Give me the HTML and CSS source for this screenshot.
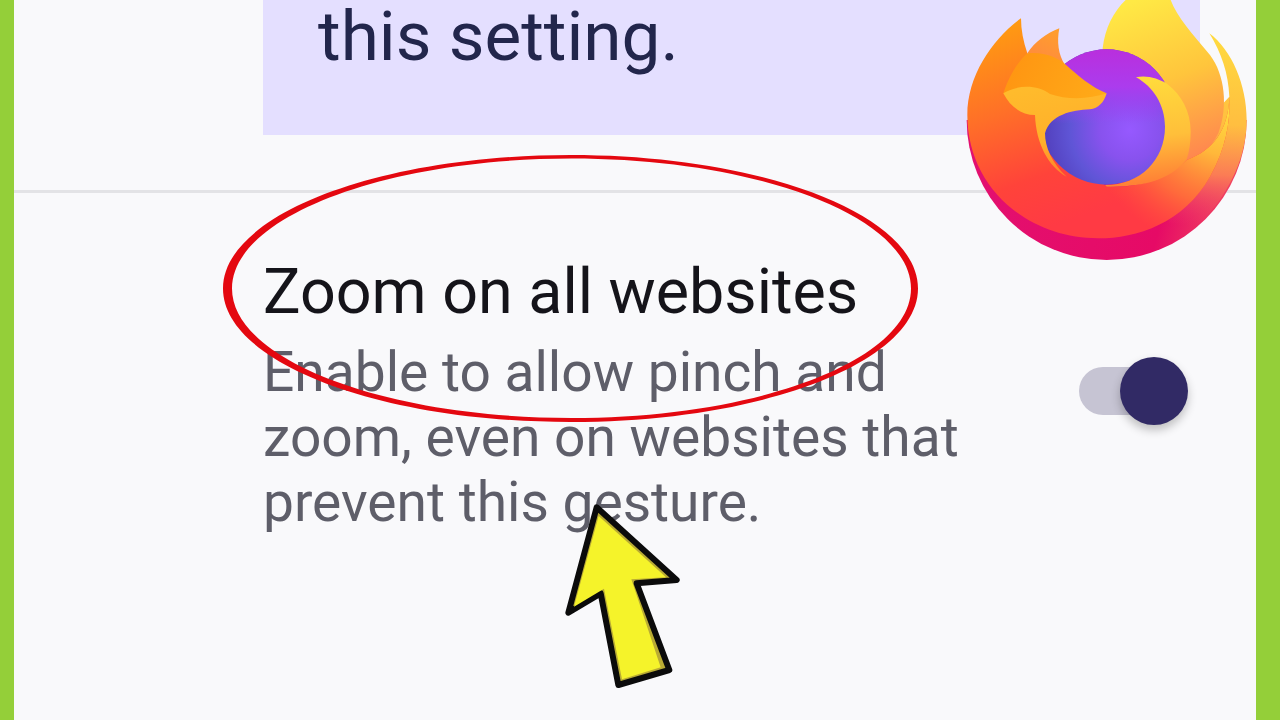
FILE: index.html
```
<!DOCTYPE html>
<html lang="en">
<head>
<meta charset="utf-8">
<title>Zoom on all websites</title>
<link rel="stylesheet" href="styles.css">
</head>
<body>
<div class="frame">
  <main class="screen">
    <section class="notice"><p class="notice-text">this setting.</p></section>
    <hr class="divider">
    <section class="setting">
      <div class="setting-copy">
        <h1 class="setting-title">Zoom on all websites</h1>
        <p class="setting-desc">Enable to allow pinch and zoom, even on websites that prevent this gesture.</p>
      </div>
      <div class="toggle"><span class="toggle-track"></span><span class="toggle-knob"></span></div>
    </section>
  </main>
</div>

<svg class="ring" viewBox="0 0 720 290" aria-hidden="true">
  <path fill="#e40810" fill-rule="evenodd" d="M3 138.500C3 64.800 158.600 5 350.500 5S698 64.800 698 138.500 542.400 272 350.500 272 3 212.200 3 138.500ZM12 138.500C12 209.800 164 268 351.500 268S691 209.800 691 138.500 539 8.500 351.500 8.500 12 67.200 12 138.500Z"/>
</svg>

<svg class="logo" viewBox="0 0 990 810" aria-hidden="true">
  <defs>
    <linearGradient id="lgBase" gradientUnits="userSpaceOnUse" x1="100" y1="500" x2="820" y2="660">
      <stop offset="0" stop-color="#e3106f"/>
      <stop offset="0.75" stop-color="#e60a66"/>
      <stop offset="1" stop-color="#f0405f"/>
    </linearGradient>
    <linearGradient id="lgFlame" gradientUnits="userSpaceOnUse" x1="560" y1="0" x2="740" y2="480">
      <stop offset="0" stop-color="#ffe945"/>
      <stop offset="0.5" stop-color="#ffc53c"/>
      <stop offset="1" stop-color="#ff8450"/>
    </linearGradient>
    <linearGradient id="lgCrescent" gradientUnits="userSpaceOnUse" x1="800" y1="120" x2="770" y2="680">
      <stop offset="0" stop-color="#ffd93f"/>
      <stop offset="0.45" stop-color="#ffbe40"/>
      <stop offset="0.72" stop-color="#fb7c55"/>
      <stop offset="1" stop-color="#ee3c6c" stop-opacity="0"/>
    </linearGradient>
    <linearGradient id="lgMain" gradientUnits="userSpaceOnUse" x1="220" y1="60" x2="420" y2="640">
      <stop offset="0" stop-color="#ff9a12"/>
      <stop offset="0.4" stop-color="#ff6f28"/>
      <stop offset="0.75" stop-color="#ff433a"/>
      <stop offset="1" stop-color="#ff3a44"/>
    </linearGradient>
    <radialGradient id="lgGlow" gradientUnits="userSpaceOnUse" cx="830" cy="310" r="440">
      <stop offset="0" stop-color="#ffe23f"/>
      <stop offset="0.35" stop-color="#ffb83a"/>
      <stop offset="0.7" stop-color="#ff7a38" stop-opacity="0.75"/>
      <stop offset="1" stop-color="#ff5a3a" stop-opacity="0"/>
    </radialGradient>
    <linearGradient id="lgEar" x1="0.8" y1="0" x2="0.4" y2="1">
      <stop offset="0" stop-color="#ff9f2c"/>
      <stop offset="1" stop-color="#ff8a3f"/>
    </linearGradient>
    <radialGradient id="lgGlobe" gradientUnits="userSpaceOnUse" cx="540" cy="390" r="300">
      <stop offset="0" stop-color="#9659ff"/>
      <stop offset="0.3" stop-color="#8852ee"/>
      <stop offset="0.6" stop-color="#5f55d6"/>
      <stop offset="1" stop-color="#4c35b0"/>
    </radialGradient>
    <linearGradient id="lgGlobeTop" x1="0" y1="0" x2="0" y2="1">
      <stop offset="0" stop-color="#b92fdd"/>
      <stop offset="0.28" stop-color="#ab3cee"/>
      <stop offset="0.55" stop-color="#a040f5" stop-opacity="0"/>
    </linearGradient>
    <linearGradient id="lgSwoosh" gradientUnits="userSpaceOnUse" x1="580" y1="230" x2="620" y2="560">
      <stop offset="0" stop-color="#ffdc3c"/>
      <stop offset="0.55" stop-color="#ffbf3a"/>
      <stop offset="1" stop-color="#ff7a35"/>
    </linearGradient>
    <linearGradient id="lgFox" gradientUnits="userSpaceOnUse" x1="260" y1="260" x2="320" y2="530">
      <stop offset="0" stop-color="#ffbb2c"/>
      <stop offset="0.6" stop-color="#ffb02a"/>
      <stop offset="1" stop-color="#ff7f2a"/>
    </linearGradient>
    <linearGradient id="lgHead" gradientUnits="userSpaceOnUse" x1="200" y1="170" x2="450" y2="290">
      <stop offset="0" stop-color="#ff9612"/>
      <stop offset="1" stop-color="#ffaa18"/>
    </linearGradient>
  </defs>
  <path fill="url(#lgBase)" d="M50 360A420 420 0 0 0 890 360Z"/>
  <path fill="url(#lgCrescent)" d="M778 100C845 150 890 255 890 360C890 470 840 570 770 650C740 680 700 695 660 700L640 500L838 290C835 220 815 160 778 100Z"/>
  <path fill="url(#lgFlame)" d="M458 145C465 85 490 35 527 0L662 0C680 50 730 105 780 165C825 225 835 320 805 400C780 450 750 475 710 490L470 400Z"/>
  <path fill="url(#lgMain)" d="M213 55C130 115 52 225 52 345C52 560 230 715 445 715C560 715 700 670 780 530C825 450 842 370 838 290C835 390 790 450 710 480C650 540 560 565 470 560L285 400L300 300L232 160C220 125 213 90 213 55Z"/>
  <path fill="url(#lgGlow)" d="M445 715C560 715 700 670 780 530C825 450 842 370 838 290C835 390 790 450 710 480C650 540 560 565 470 560L400 640Z"/>
  <path fill="url(#lgEar)" d="M328 85C290 100 255 125 232 160L345 195C325 165 320 125 328 85Z"/>
  <circle cx="470" cy="351" r="203" fill="url(#lgGlobe)"/>
  <circle cx="470" cy="351" r="203" fill="url(#lgGlobeTop)"/>
  <path fill="url(#lgSwoosh)" d="M558 232C590 225 625 235 652 252C695 285 722 335 722 395C722 425 718 455 710 478C670 530 600 562 470 560L465 555C570 555 645 480 645 380C645 315 610 260 558 232Z"/>
  <path fill="url(#lgHead)" d="M232 160C285 155 320 172 345 192C385 228 425 262 470 280L400 310L300 300L160 280C180 220 205 185 232 160Z"/>
  <path fill="url(#lgFox)" d="M160 280C200 255 260 252 300 282C350 300 420 298 470 280C462 308 445 325 420 328C365 330 300 345 285 400C285 440 305 490 350 530C295 500 258 430 255 345C215 345 180 320 160 280Z"/>
</svg>

<svg class="pointer" viewBox="0 0 480 630" aria-hidden="true">
  <path fill="#b9ab34" stroke="#0b0b0b" stroke-width="18" stroke-linejoin="round" d="M170 52L410 270L290 280L388 540L235 585L182 310L85 368Z"/>
  <path fill="#f5f32a" d="M176 78L378 262L274 268L362 532L246 568L192 296L102 350Z"/>
</svg>
```

FILE: styles.css
```
* { box-sizing: border-box; }

html, body {
  margin: 0;
  padding: 0;
  width: 1280px;
  height: 720px;
  overflow: hidden;
}

body {
  position: relative;
  background: #94cf39;
  font-family: Roboto, "Liberation Sans", sans-serif;
}

.frame {
  display: flex;
  height: 720px;
  padding: 0 24px 0 14px;
}

.screen {
  flex: 1;
  background: #f9f9fb;
  display: flex;
  flex-direction: column;
}

.notice {
  height: 135px;
  margin: 0 56px 0 249px;
  background: #e4dfff;
  padding-left: 55px;
}

.notice-text {
  margin: 0;
  font-size: 69.3px;
  line-height: 74px;
  color: #22264c;
}

.divider {
  height: 3px;
  margin: 55px 0 0;
  border: 0;
  background: #e3e3e6;
}

.setting {
  display: flex;
  align-items: flex-start;
  padding: 55px 67px 0 249px;
}

.setting-copy {
  width: 720px;
}

.setting-title {
  margin: 0 0 4px;
  font-size: 62.8px;
  font-weight: 400;
  line-height: 88px;
  color: #15141a;
}

.setting-desc {
  margin: 0;
  font-size: 55.1px;
  line-height: 65px;
  color: #5e5e69;
}

.toggle {
  position: relative;
  width: 110px;
  height: 68px;
  margin: 109px 0 0 auto;
}

.toggle-track {
  position: absolute;
  left: 0;
  top: 10px;
  width: 90px;
  height: 48px;
  border-radius: 24px;
  background: #c6c4d3;
}

.toggle-knob {
  position: absolute;
  left: 41px;
  top: 0;
  width: 68px;
  height: 68px;
  border-radius: 50%;
  background: #312a65;
  box-shadow: 0 5px 10px rgba(0, 0, 0, 0.24);
}

.ring {
  position: absolute;
  left: 220px;
  top: 150px;
  width: 720px;
  height: 290px;
}

.logo {
  position: absolute;
  left: 950px;
  top: 0;
  width: 330px;
  height: 270px;
}

.pointer {
  position: absolute;
  left: 540px;
  top: 490px;
  width: 160px;
  height: 210px;
}
```
